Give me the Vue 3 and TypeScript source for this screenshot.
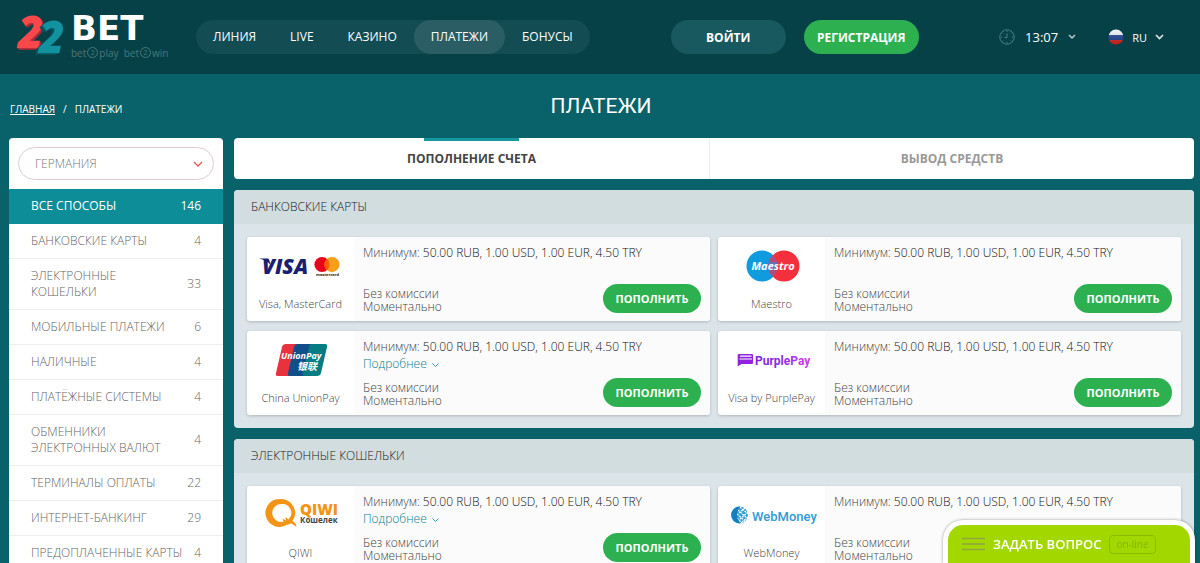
<script setup lang="ts">
import { ref } from 'vue'

type LogoName = 'visa' | 'maestro' | 'unionpay' | 'purplepay' | 'qiwi' | 'webmoney'

interface Method {
  logo: LogoName
  name: string
  more?: boolean
}

interface Group {
  title: string
  methods: Method[]
}

const nav = ['ЛИНИЯ', 'LIVE', 'КАЗИНО', 'ПЛАТЕЖИ', 'БОНУСЫ']
const activeNav = 'ПЛАТЕЖИ'

const categories = [
  { name: 'ВСЕ СПОСОБЫ', count: 146 },
  { name: 'БАНКОВСКИЕ КАРТЫ', count: 4 },
  { name: 'ЭЛЕКТРОННЫЕ\nКОШЕЛЬКИ', count: 33 },
  { name: 'МОБИЛЬНЫЕ ПЛАТЕЖИ', count: 6 },
  { name: 'НАЛИЧНЫЕ', count: 4 },
  { name: 'ПЛАТЁЖНЫЕ СИСТЕМЫ', count: 4 },
  { name: 'ОБМЕННИКИ\nЭЛЕКТРОННЫХ ВАЛЮТ', count: 4 },
  { name: 'ТЕРМИНАЛЫ ОПЛАТЫ', count: 22 },
  { name: 'ИНТЕРНЕТ-БАНКИНГ', count: 29 },
  { name: 'ПРЕДОПЛАЧЕННЫЕ КАРТЫ', count: 4 },
]
const activeCategory = ref('ВСЕ СПОСОБЫ')

const tabs = ['ПОПОЛНЕНИЕ СЧЕТА', 'ВЫВОД СРЕДСТВ']
const activeTab = ref(tabs[0])

const country = ref('ГЕРМАНИЯ')

const groups: Group[] = [
  {
    title: 'БАНКОВСКИЕ КАРТЫ',
    methods: [
      { logo: 'visa', name: 'Visa, MasterCard' },
      { logo: 'maestro', name: 'Maestro' },
      { logo: 'unionpay', name: 'China UnionPay', more: true },
      { logo: 'purplepay', name: 'Visa by PurplePay' },
    ],
  },
  {
    title: 'ЭЛЕКТРОННЫЕ КОШЕЛЬКИ',
    methods: [
      { logo: 'qiwi', name: 'QIWI', more: true },
      { logo: 'webmoney', name: 'WebMoney' },
    ],
  },
]
</script>

<template>
  <div class="page">
    <header class="header">
      <a href="#" class="brand" aria-label="22BET">
        <svg class="brand-mark" width="50" height="48" viewBox="0 0 50 48" aria-hidden="true">
          <text class="numeral red" x="2" y="35">2</text>
          <text class="numeral teal" x="23" y="40">2</text>
        </svg>
        <span class="brand-words">
          <span class="brand-name">BET</span>
          <span class="tagline">bet<i>2</i>play&nbsp; bet<i>2</i>win</span>
        </span>
      </a>

      <nav class="nav">
        <a v-for="item in nav" :key="item" href="#" :class="{ active: item === activeNav }">{{ item }}</a>
      </nav>

      <div class="auth">
        <button type="button" class="pill login">ВОЙТИ</button>
        <button type="button" class="pill register">РЕГИСТРАЦИЯ</button>
      </div>

      <div class="tools">
        <button type="button" class="tool">
          <svg width="16" height="16" viewBox="0 0 16 16" fill="none" stroke="#527d82" aria-hidden="true">
            <circle cx="8" cy="8" r="7.2" />
            <path d="M8 4.5V8.5H5.5M8 2V3M8 13v1M2 8h1M13 8h1M3.8 3.8l.6.6M12.2 3.8l-.6.6M3.8 12.2l.6-.6M12.2 12.2l-.6-.6" />
          </svg>
          <span class="time">13:07</span>
          <svg width="8" height="6" viewBox="0 0 8 6" fill="none" stroke="#b8cccf" stroke-width="1.5" aria-hidden="true"><path d="M1 1l3 3 3-3" /></svg>
        </button>
        <button type="button" class="tool lang">
          <svg width="16" height="16" viewBox="0 0 16 16" aria-hidden="true">
            <defs>
              <clipPath id="flag-clip"><circle cx="8" cy="8" r="7.5" /></clipPath>
              <linearGradient id="flag-shade" x1="0" y1="0" x2="0" y2="1">
                <stop offset="0" stop-color="#fff" stop-opacity=".2" />
                <stop offset="1" stop-color="#000" stop-opacity=".2" />
              </linearGradient>
            </defs>
            <g clip-path="url(#flag-clip)">
              <path fill="#f2f4f8" d="M0 0h16v6H0z" />
              <path fill="#1c3f94" d="M0 6h16v5H0z" />
              <path fill="#e5231f" d="M0 11h16v5H0z" />
              <path fill="url(#flag-shade)" d="M0 0h16v16H0z" />
            </g>
          </svg>
          <span>RU</span>
          <svg width="9" height="7" viewBox="0 0 9 7" fill="none" stroke="#dbe6e7" stroke-width="1.6" aria-hidden="true"><path d="M1 1l3.500 3.500L8 1" /></svg>
        </button>
      </div>
    </header>

    <div class="heading">
      <div class="crumbs">
        <a href="#">ГЛАВНАЯ</a><span>/</span><span>ПЛАТЕЖИ</span>
      </div>
      <h1>ПЛАТЕЖИ</h1>
    </div>

    <div class="columns">
      <aside class="sidebar">
        <div class="country">
          <select v-model="country" aria-label="Страна">
            <option>ГЕРМАНИЯ</option>
          </select>
          <svg class="country-arrow" width="10" height="7" viewBox="0 0 10 7" fill="none" stroke="#e05a55" stroke-width="1.3" aria-hidden="true"><path d="M1 1l4 4 4-4" /></svg>
        </div>
        <ul>
          <li v-for="c in categories" :key="c.name">
            <button type="button" :class="{ active: c.name === activeCategory }" @click="activeCategory = c.name">
              <span class="name">{{ c.name }}</span><span>{{ c.count }}</span>
            </button>
          </li>
        </ul>
      </aside>

      <main class="main">
        <div class="tabs">
          <button v-for="t in tabs" :key="t" type="button" :class="{ active: t === activeTab }" @click="activeTab = t">{{ t }}</button>
        </div>

        <section v-for="g in groups" :key="g.title" class="group">
          <h2>{{ g.title }}</h2>
          <div class="cards">
            <article v-for="m in g.methods" :key="m.name" class="card">
              <div class="brand-cell">
                <svg class="logo" width="90" height="40" viewBox="0 0 90 40" aria-hidden="true">
                  <template v-if="m.logo === 'visa'">
                    <text class="visa" x="6" y="28">VISA</text>
                    <path fill="#1a1f71" d="M3 12.500h8c1.500 0 2 .6 2.400 2l1 4C11.500 15.500 8 13.600 3 12.500z" />
                    <circle cx="66" cy="18.500" r="7.600" fill="#eb001b" />
                    <circle cx="76" cy="18.500" r="7.600" fill="#f79e1b" />
                    <path fill="#ff5f00" d="M71 12.700a7.600 7.600 0 0 1 0 11.600a7.600 7.600 0 0 1 0-11.600z" />
                    <text class="mc" x="60" y="30">mastercard</text>
                  </template>
                  <template v-else-if="m.logo === 'maestro'">
                    <circle cx="35" cy="20" r="15.500" fill="#109bdf" />
                    <circle cx="57" cy="20" r="15.500" fill="#f5303d" />
                    <path fill="#6c6bbd" d="M46 9a15.500 15.500 0 0 1 0 22a15.500 15.500 0 0 1 0-22z" />
                    <path stroke="#f5303d" stroke-width="1" d="M45 11h3M43 13h6M43 15h7M42 25h8M43 27h7M44 29h4" />
                    <text class="maestro" x="46" y="24" text-anchor="middle">Maestro</text>
                  </template>
                  <template v-else-if="m.logo === 'unionpay'">
                    <path fill="#e8333f" d="M30 4h18L40 36H22c-2 0-2.500-1.200-2-3l6-26c.5-2 2-3 4-3z" />
                    <path fill="#114f8b" d="M42 4h17L51 36H34c-2 0-2.500-1.200-2-3l6-26c.5-2 2-3 4-3z" />
                    <path fill="#087c83" d="M56 4h13c2 0 2.500 1.200 2 3l-6 26c-.5 2-2 3-4 3H49c-2 0-2.500-1.200-2-3l6-26c.5-2 1-3 3-3z" />
                    <text class="up" x="25" y="19">UnionPay</text>
                    <text class="up-cjk" x="41" y="30">银联</text>
                  </template>
                  <template v-else-if="m.logo === 'purplepay'">
                    <defs>
                      <linearGradient id="pp" gradientUnits="userSpaceOnUse" x1="10" y1="0" x2="82" y2="0">
                        <stop offset="0" stop-color="#7a1fe0" />
                        <stop offset=".6" stop-color="#8a2ae0" />
                        <stop offset="1" stop-color="#d03ce4" />
                      </linearGradient>
                    </defs>
                    <path fill="#9222dd" d="M12 14h13q1 0 1 1v8q0 1-1 1H14.500l-3.800 2.600V15.200q0-1.200 1.300-1.200z" />
                    <path fill="#fff" d="M13 15.500h11.500v1.200H13zM12.500 18.500h12.500v1H12.500z" />
                    <text class="pp" x="28" y="25" fill="url(#pp)">PurplePay</text>
                  </template>
                  <template v-else-if="m.logo === 'qiwi'">
                    <path fill="#f39416" fill-rule="evenodd" d="M25 4a14 14 0 0 1 11.500 22c2 1.200 3.500 2.500 4 5.500-2-.6-3-2.200-5.500-3.300-1.500 1.200-3 1-4.500 1.800A14 14 0 1 1 25 4zm0 5a9 9 0 1 0 2.500 17.700l-1-3.200 3.200 2-.2-3.500 3 2.400A9 9 0 0 0 25 9z" />
                    <text class="qiwi" x="44" y="20">QIWI</text>
                    <text class="qiwi-sub" x="44" y="28">Кошелек</text>
                  </template>
                  <template v-else>
                    <circle cx="12.500" cy="20" r="8.500" fill="#3a9fd2" />
                    <path fill="none" stroke="#fff" stroke-width="1.100" stroke-dasharray="2 1" d="M13 12l8 7M11 15l10 9M10 19l9 8M10 23l6 6M18 13l-7 6M21 17l-9 8M21 22l-7 6" />
                    <path fill="#1380bd" d="M13 11.500q-6 8.500 0 17A8.500 8.500 0 0 1 13 11.500z" />
                    <text class="wm" x="25" y="26">WebMoney</text>
                  </template>
                </svg>
                <span class="label">{{ m.name }}</span>
              </div>
              <div class="info">
                <div class="top">
                  <p>Минимум: <span class="limits">50.00 RUB, 1.00 USD, 1.00 EUR, 4.50 TRY</span></p>
                  <a v-if="m.more" href="#">Подробнее
                    <svg width="7" height="5" viewBox="0 0 7 5" fill="none" stroke="#2f98a2" aria-hidden="true"><path d="M.5.5l3 3 3-3" /></svg>
                  </a>
                </div>
                <div class="bottom">
                  <p>Без комиссии<br />Моментально</p>
                  <button type="button" class="deposit">ПОПОЛНИТЬ</button>
                </div>
              </div>
            </article>
          </div>
        </section>
      </main>
    </div>

    <button type="button" class="chat">
      <svg width="23" height="14" viewBox="0 0 23 14" stroke="#8fa343" stroke-width="1.500" aria-hidden="true"><path d="M0 1.500h23M0 7h23M0 12.500h23" /></svg>
      <span class="ask">ЗАДАТЬ ВОПРОС</span>
      <span class="online">on-line</span>
    </button>
  </div>
</template>

<style>
body {
  margin: 0;
  background: #09626a;
}
</style>

<style scoped>
.page {
  height: 100vh;
  overflow: hidden;
  background: #09626a;
  color: #444;
  font-family: 'Open Sans', 'Noto Sans', sans-serif;
  font-size: 12px;
}
button {
  border: 0;
  padding: 0;
  background: none;
  font: inherit;
  color: inherit;
  cursor: pointer;
}
a {
  color: inherit;
  text-decoration: none;
}
p {
  margin: 0;
}
svg {
  overflow: visible;
}
.header {
  display: grid;
  grid-template-columns: 180px auto 1fr auto;
  align-items: center;
  height: 74px;
  padding: 0 36px 0 16px;
  background: #064148;
  color: #fff;
}
.brand {
  display: flex;
  gap: 5px;
}
.numeral {
  font-weight: 800;
  font-style: italic;
  font-size: 44px;
}
.red {
  fill: #f9484c;
  filter: drop-shadow(1px 1px 0 #b3303b) drop-shadow(1px 1px 0 #8f2b38);
}
.teal {
  fill: #12929f;
  filter: drop-shadow(-1px 1px 0 #09636f) drop-shadow(-2px 1px 0 #064e58);
}
.brand-words {
  display: flex;
  flex-direction: column;
  align-items: flex-start;
}
.brand-name {
  font-family: 'DejaVu Sans', sans-serif;
  font-weight: 700;
  font-size: 34px;
  line-height: 31px;
}
.tagline {
  display: flex;
  align-items: center;
  font-size: 10px;
  line-height: 18px;
  color: #4d7579;
  white-space: nowrap;
}
.tagline i {
  width: 9px;
  height: 9px;
  margin: 0 1px;
  border: 1px solid #4d7579;
  border-radius: 50%;
  font-style: normal;
  font-size: 7px;
  line-height: 9px;
  text-align: center;
}
.nav {
  display: flex;
  border-radius: 17px;
  background: #134c52;
}
.nav a {
  padding: 0 17px;
  border-radius: 17px;
  line-height: 34px;
}
.nav .active {
  background: #2b5e64;
}
.auth {
  display: flex;
  gap: 18px;
  margin-left: 81px;
}
.pill {
  width: 115px;
  height: 34px;
  border-radius: 17px;
  font-weight: 700;
}
.login {
  background: #18585f;
}
.register {
  background: #2db150;
}
.tools {
  display: flex;
  gap: 32px;
}
.tool {
  display: flex;
  align-items: center;
  gap: 10px;
}
.time {
  font-size: 13px;
}
.lang {
  gap: 8px;
  font-size: 11px;
}
.heading {
  display: grid;
  grid-template-columns: 1fr auto 1fr;
  align-items: center;
  height: 64px;
  padding: 0 8px 0 10px;
  color: #fff;
}
.crumbs {
  display: flex;
  gap: 8px;
  padding-top: 6px;
  font-size: 10px;
}
.crumbs a {
  text-decoration: underline;
}
h1 {
  margin: 0;
  font-family: Roboto, sans-serif;
  font-weight: 400;
  font-size: 21px;
}
.columns {
  display: grid;
  grid-template-columns: 214px 1fr;
  align-items: start;
  gap: 11px;
  padding: 0 6px 0 9px;
}
.sidebar {
  overflow: hidden;
  border-radius: 4px;
  background: #fff;
}
.country {
  position: relative;
  padding: 9px;
}
.country select {
  display: block;
  width: 100%;
  height: 33px;
  padding: 0 16px;
  border: 1px solid #dfcbd2;
  border-radius: 17px;
  appearance: none;
  background: #fff;
  color: #777;
  font: inherit;
  font-weight: 300;
}
.country-arrow {
  position: absolute;
  top: 23px;
  right: 20px;
  pointer-events: none;
}
ul {
  margin: 0;
  padding: 0;
  list-style: none;
}
li button {
  display: flex;
  justify-content: space-between;
  align-items: center;
  width: 100%;
  padding: 9px 22px;
  border-bottom: 1px solid #eee;
  color: #666;
  font-weight: 300;
  line-height: 16px;
  text-align: left;
}
.name {
  white-space: pre;
}
li .active {
  border-color: #0c8d98;
  background: #0c8d98;
  color: #fff;
  font-weight: 400;
}
.main {
  display: grid;
  gap: 11px;
}
.tabs {
  display: grid;
  grid-template-columns: 475fr 485fr;
  overflow: hidden;
  height: 41px;
  border-radius: 4px;
  background: #fff;
}
.tabs button {
  position: relative;
  color: #999;
  font-weight: 700;
}
.tabs button + button {
  border-left: 1px solid #eee;
}
.tabs .active {
  color: #444;
}
.tabs .active::before {
  content: '';
  position: absolute;
  top: 0;
  left: 40%;
  right: 40%;
  height: 3px;
  background: #1899a2;
}
.group {
  overflow: hidden;
  border-radius: 4px;
  background: #dbe4e9;
}
h2 {
  margin: 0;
  padding: 0 17px;
  background: #d2dde0;
  color: #222;
  font-size: 12px;
  font-weight: 300;
  line-height: 34px;
}
.cards {
  display: grid;
  grid-template-columns: 1fr 1fr;
  gap: 10px 8px;
  padding: 13px;
}
.card {
  display: grid;
  grid-template-columns: 107px 1fr;
  overflow: hidden;
  min-height: 84px;
  border-radius: 3px;
  background: #fff;
  box-shadow: 0 1px 3px rgb(0 0 0 / 20%);
}
.brand-cell {
  display: flex;
  flex-direction: column;
  align-items: center;
  justify-content: space-between;
  padding: 9px 0;
}
.label {
  font-size: 11px;
  font-weight: 300;
  line-height: 16px;
}
.info {
  display: flex;
  flex-direction: column;
  justify-content: space-between;
  padding: 7px 9px 8px;
  background: #fbfbfb;
  font-weight: 300;
}
.top {
  line-height: 17px;
}
.limits {
  color: #111;
}
.top a {
  color: #087f8b;
}
.top svg {
  margin-left: 2px;
}
.bottom {
  display: flex;
  justify-content: space-between;
  align-items: flex-end;
  line-height: 13px;
}
.deposit {
  width: 98px;
  height: 29px;
  border-radius: 15px;
  background: #2db150;
  color: #fff;
  font-size: 11px;
  font-weight: 700;
}
.visa {
  fill: #1a1f71;
  font-weight: 800;
  font-style: italic;
  font-size: 21px;
}
.mc {
  fill: #222;
  font-size: 4px;
  font-weight: 700;
}
.maestro {
  fill: #fff;
  font-size: 11px;
  font-weight: 700;
  font-style: italic;
}
.up {
  fill: #fff;
  font-size: 9px;
  font-weight: 700;
  font-style: italic;
}
.up-cjk {
  fill: #fff;
  font-family: 'Noto Sans CJK SC', sans-serif;
  font-size: 10px;
  font-weight: 700;
  font-style: italic;
}
.pp {
  font-family: Roboto, sans-serif;
  font-size: 12px;
  font-weight: 700;
}
.qiwi {
  fill: #f39416;
  font-size: 15px;
  font-weight: 800;
}
.qiwi-sub {
  fill: #444;
  font-size: 8px;
  font-weight: 700;
}
.wm {
  fill: #2f9bd4;
  font-family: Roboto, sans-serif;
  font-size: 13px;
  font-weight: 500;
}
.chat {
  position: fixed;
  right: 5px;
  bottom: 0;
  display: flex;
  align-items: center;
  gap: 8px;
  width: 252px;
  height: 43px;
  padding: 0 14px;
  border: solid #fff;
  border-width: 5px 5px 0;
  border-radius: 20px 20px 0 0;
  background: #a2d800;
  box-shadow: 0 0 3px rgb(0 0 0 / 40%);
  box-sizing: border-box;
  color: #fff;
}
.ask {
  font-size: 13px;
  font-weight: 600;
}
.online {
  padding: 0 6px;
  border: 1px solid #8cba04;
  border-radius: 4px;
  color: #86b206;
  font-size: 10px;
  line-height: 17px;
}
</style>
